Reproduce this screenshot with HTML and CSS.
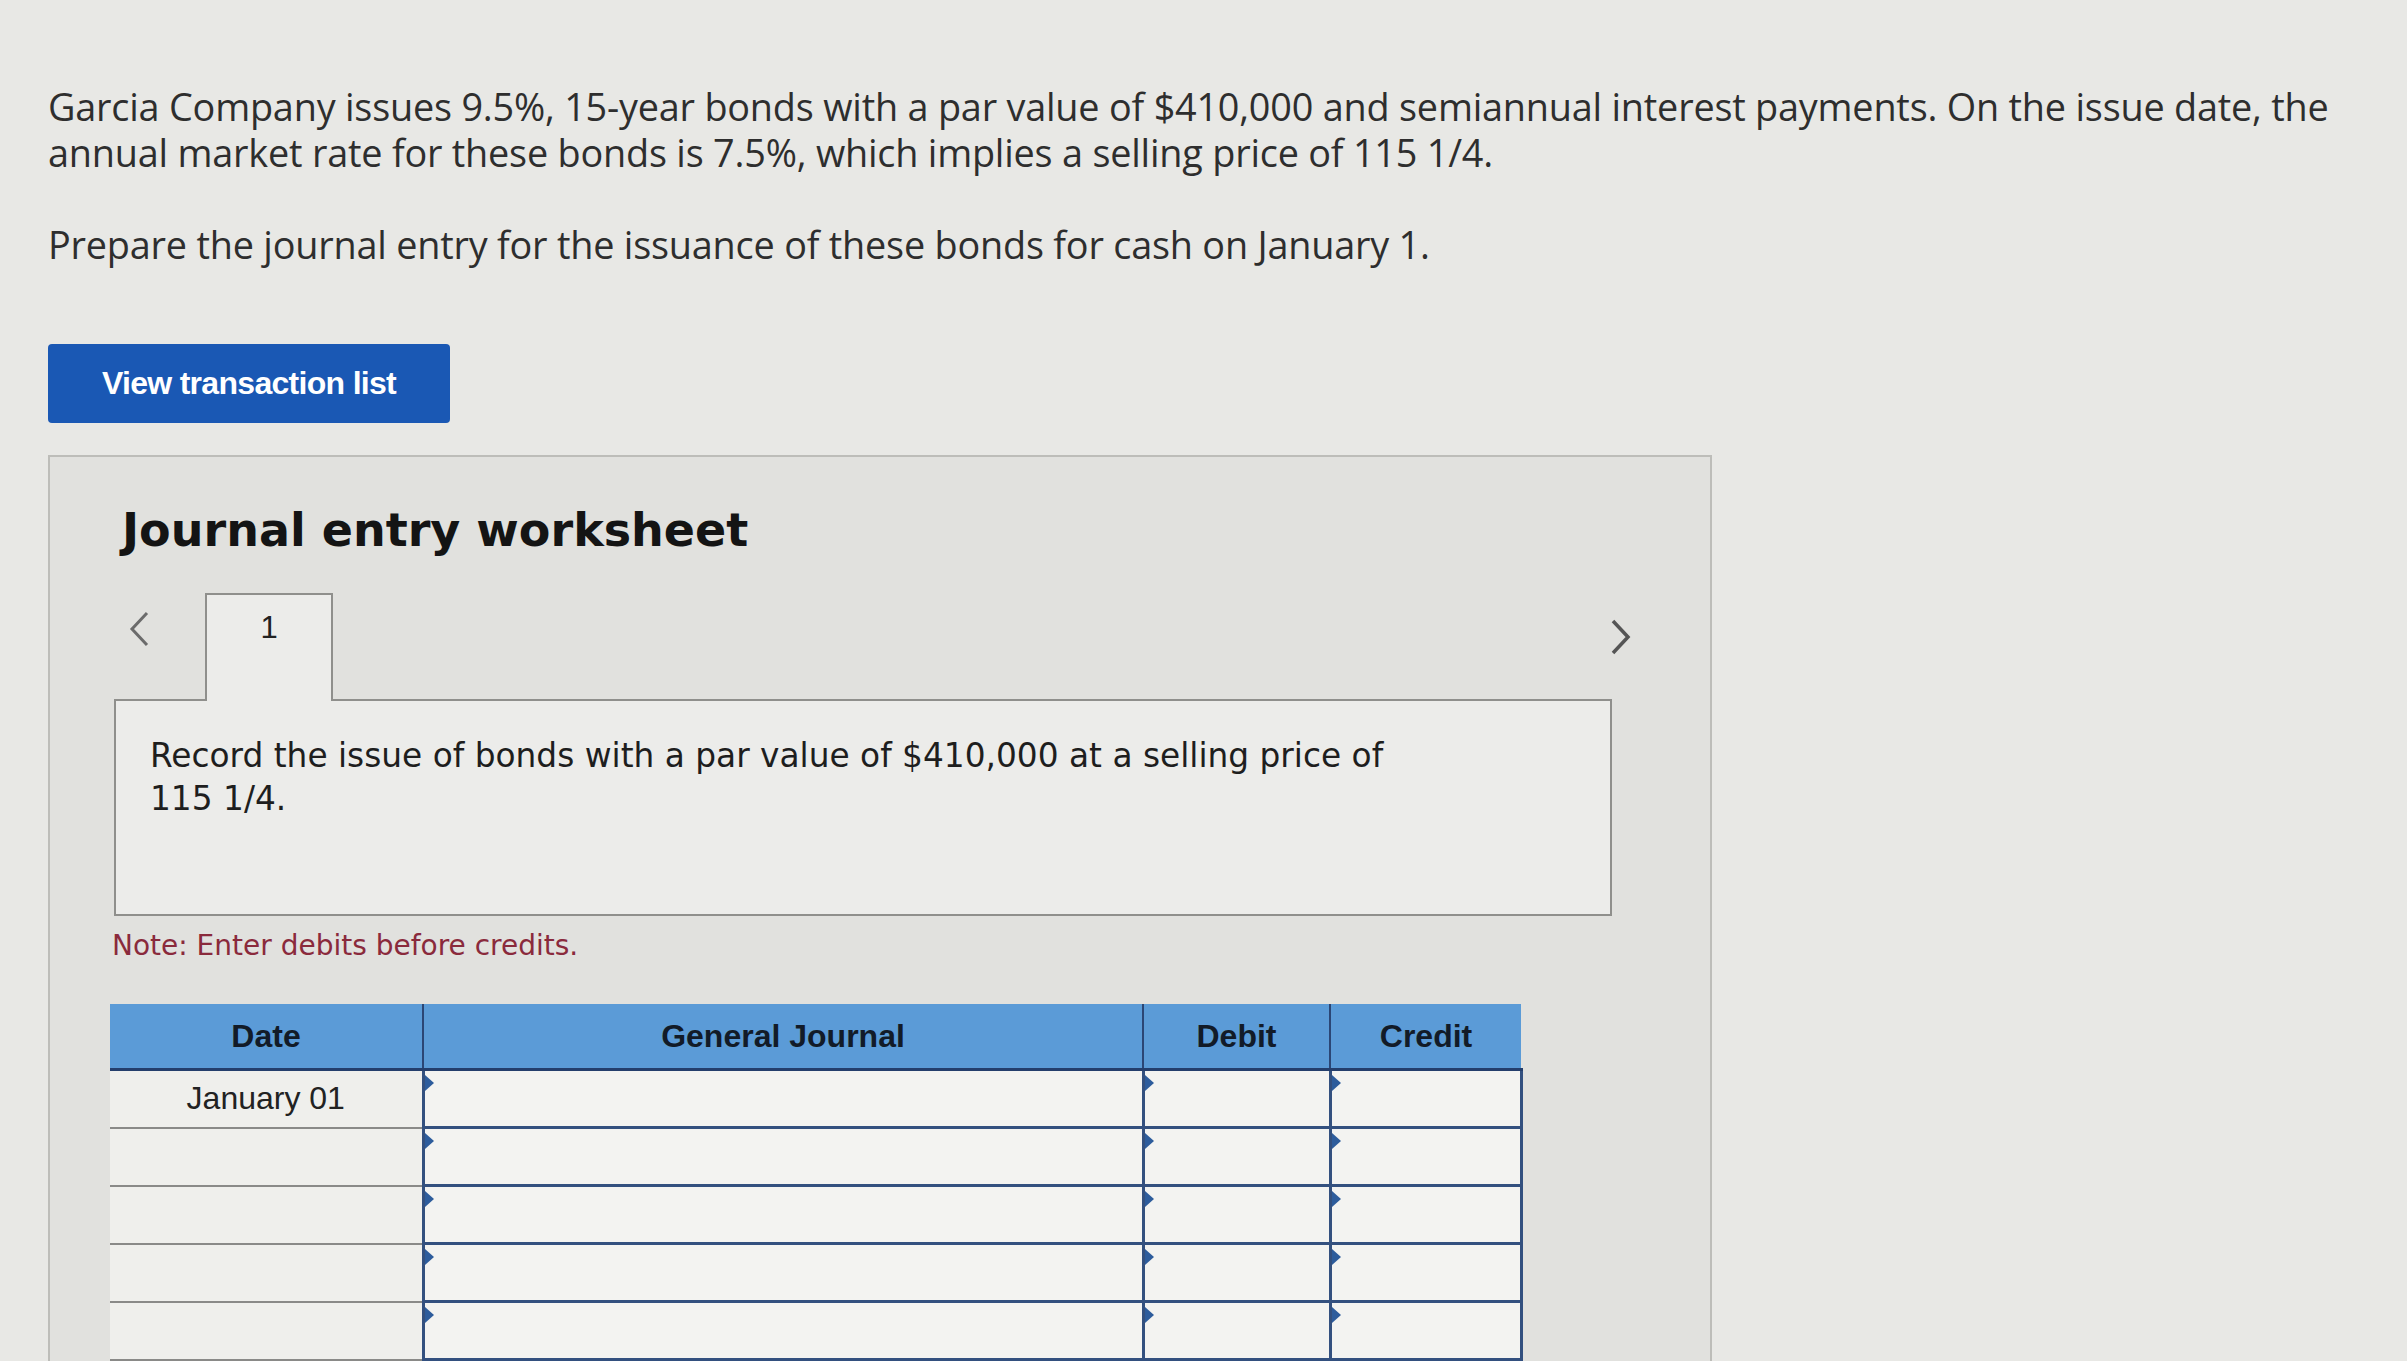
FILE: index.html
```html
<!DOCTYPE html>
<html lang="en">

<head>
    <meta charset="utf-8">
    <title>Journal entry worksheet</title>
    <link rel="stylesheet" href="styles.css">
</head>

<body>
    <div class="page">
        <p class="intro">Garcia Company issues 9.5%, 15-year bonds with a par value of $410,000 and semiannual interest payments. On the issue date, the annual market rate for these bonds is 7.5%, which implies a selling price of 115 1/4.</p>
        <p class="intro task">Prepare the journal entry for the issuance of these bonds for cash on January 1.</p>
        <button class="btn">View transaction list</button>

        <div class="panel">
            <h2 class="panel-title">Journal entry worksheet</h2>
            <div class="tabs">
                <span class="arrow">
                    <svg width="22" height="36" viewBox="0 0 22 36"><path d="M19 2 L4 18 L19 34" fill="none" stroke="#6b6b6b" stroke-width="3"/></svg>
                </span>
                <div class="tab">1</div>
                <span class="arrow arrow-right">
                    <svg width="22" height="36" viewBox="0 0 22 36"><path d="M3 2 L18 18 L3 34" fill="none" stroke="#555" stroke-width="3.5"/></svg>
                </span>
            </div>
            <div class="desc">
                <p>Record the issue of bonds with a par value of $410,000 at a selling price of 115 1/4.</p>
            </div>
            <p class="note">Note: Enter debits before credits.</p>

            <table class="journal">
                <thead>
                    <tr>
                        <th class="c-date">Date</th>
                        <th class="c-acct">General Journal</th>
                        <th class="c-debit">Debit</th>
                        <th class="c-credit">Credit</th>
                    </tr>
                </thead>
                <tbody>
                    <tr>
                        <td class="date">January 01</td>
                        <td class="cell"></td>
                        <td class="cell"></td>
                        <td class="cell"></td>
                    </tr>
                    <tr>
                        <td class="date"></td>
                        <td class="cell"></td>
                        <td class="cell"></td>
                        <td class="cell"></td>
                    </tr>
                    <tr>
                        <td class="date"></td>
                        <td class="cell"></td>
                        <td class="cell"></td>
                        <td class="cell"></td>
                    </tr>
                    <tr>
                        <td class="date"></td>
                        <td class="cell"></td>
                        <td class="cell"></td>
                        <td class="cell"></td>
                    </tr>
                    <tr>
                        <td class="date"></td>
                        <td class="cell"></td>
                        <td class="cell"></td>
                        <td class="cell"></td>
                    </tr>
                </tbody>
            </table>
        </div>
    </div>
</body>

</html>
```

FILE: styles.css
```css
body {
    margin: 0;
    background: #e8e8e5;
    color: #2e2e2e;
    font-family: "Open Sans", "Liberation Sans", sans-serif;
}

.page {
    padding: 84px 0 0 48px;
}

.intro {
    max-width: 2320px;
    margin: 0;
    font-size: 37.8px;
    line-height: 46px;
    letter-spacing: -0.2px;
}

.task {
    margin-top: 46px;
}

.btn {
    display: block;
    margin-top: 76px;
    width: 402px;
    height: 79px;
    border: none;
    border-radius: 4px;
    background: #1a58b4;
    color: #fff;
    font-family: "Liberation Sans", Arial, sans-serif;
    font-size: 32px;
    font-weight: bold;
    letter-spacing: -0.7px;
}

.panel {
    width: 1596px;
    margin-top: 32px;
    padding: 46px 0 0 64px;
    height: 900px;
    background: #e1e1de;
    border: 2px solid #bdbdb9;
}

.panel-title {
    margin: 0 0 36px 8px;
    font-family: "DejaVu Sans", Verdana, sans-serif;
    font-size: 46px;
    line-height: 54px;
    color: #141414;
}

.tabs {
    display: flex;
    align-items: flex-start;
    width: 1518px;
}

.arrow {
    margin: 18px 0 0 14px;
}

.arrow-right {
    margin: 26px 0 0 auto;
}

.tab {
    position: relative;
    z-index: 1;
    width: 124px;
    height: 106px;
    margin: 0 0 -2px 55px;
    background: #ececea;
    border: 2px solid #8f8f8c;
    border-bottom: none;
    text-align: center;
    font-family: "Liberation Sans", Arial, sans-serif;
    font-size: 31px;
    line-height: 66px;
    color: #222;
}

.desc {
    width: 1494px;
    height: 213px;
    background: #ececea;
    border: 2px solid #8f8f8c;
}

.desc p {
    max-width: 1280px;
    margin: 34px 0 0 34px;
    font-family: "DejaVu Sans", Verdana, sans-serif;
    font-size: 32.8px;
    line-height: 43px;
    color: #1e1e1e;
}

.note {
    margin: 12px 0 40px -2px;
    font-family: "DejaVu Sans", Verdana, sans-serif;
    font-size: 28px;
    line-height: 36px;
    color: #8a2a3c;
}

.journal {
    width: 1397px;
    margin-left: -4px;
    table-layout: fixed;
    border-collapse: collapse;
    font-family: "Liberation Sans", Arial, sans-serif;
}

.journal th {
    height: 62px;
    background: #5b9bd7;
    color: #121b28;
    font-size: 32px;
    border-left: 2px solid #2b4675;
    border-bottom: 3px solid #243e6c;
}

.journal th:first-child {
    border-left: none;
}

.c-date {
    width: 310px;
}

.c-acct {
    width: 716px;
}

.c-debit {
    width: 183px;
}

.c-credit {
    width: 188px;
}

.journal td {
    height: 55px;
    padding: 0;
}

.date {
    background: #efefec;
    border-bottom: 2px solid #8a8a88;
    text-align: center;
    font-size: 32px;
    color: #222;
}

.cell {
    position: relative;
    background: #f3f3f1;
    border: 3px solid #33507f;
}

.cell::before {
    content: "";
    position: absolute;
    left: 0;
    top: 4px;
    border-top: 8px solid transparent;
    border-bottom: 8px solid transparent;
    border-left: 9px solid #2d5c9c;
}
```
